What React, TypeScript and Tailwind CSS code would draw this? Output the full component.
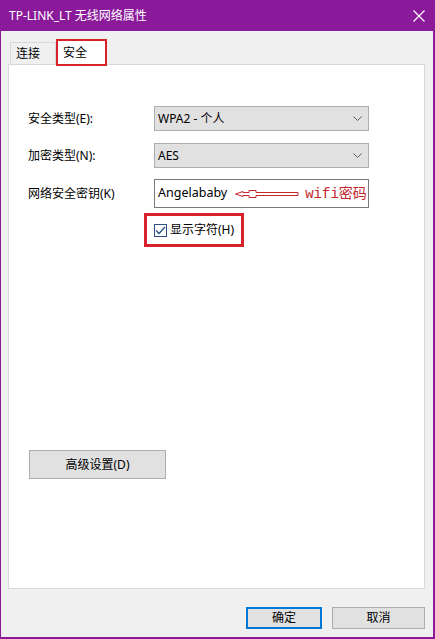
import { ReactNode } from 'react';

const font = "font-['Noto_Sans','Noto_Sans_CJK_SC',sans-serif]";

function Chevron() {
    return (
        <svg width="9" height="5" viewBox="0 0 9 5" className="mr-[6px]">
            <path d="M0.5 0.5 L4.5 4.5 L8.5 0.5" fill="none" stroke="#5a5a5a" strokeWidth="1" />
        </svg>
    );
}

function Select({ value }: { value: string }) {
    return (
        <div className="flex h-[25px] w-[215px] items-center justify-between border border-[#adadad] bg-[#e1e1e1] pl-[3px]">
            <span className="text-[12px] leading-none text-black">{value}</span>
            <Chevron />
        </div>
    );
}

function Row({ label, children, className = '' }: { label: string; children: ReactNode; className?: string }) {
    return (
        <div className={`flex items-center ${className}`}>
            <span className="w-[126px] text-[12px] leading-none text-black">{label}</span>
            {children}
        </div>
    );
}

export default function App() {
    return (
        <div className={`${font} flex h-[639px] w-[435px] flex-col border-b-2 border-l border-r-2 border-[#8a1a9a] bg-[#f0f0f0]`}>
            {/* title bar */}
            <div className="flex h-[31px] shrink-0 items-center justify-between bg-[#8a1a9a] pl-[8px] pr-[8px]">
                <span className="text-[12px] leading-none text-white">TP-LINK_LT 无线网络属性</span>
                <svg width="12" height="12" viewBox="0 0 12 12">
                    <path d="M0.5 0.5 L11.5 11.5 M11.5 0.5 L0.5 11.5" stroke="#ffffff" strokeWidth="1.2" />
                </svg>
            </div>

            <div className="ml-[7px] flex w-[417px] flex-1 flex-col">
                {/* tabs */}
                <div className="flex h-[33px] items-end pl-[2px]">
                    <div className="flex h-[22px] w-[46px] items-center border border-b-0 border-[#d9d9d9] pl-[5px] text-[12px] leading-none text-black">
                        连接
                    </div>
                    <div className="relative z-10 -mb-[2px] flex h-[27px] w-[51px] items-center border-2 border-[#d8232c] bg-white pl-[5px] text-[12px] leading-none text-black">
                        安全
                    </div>
                </div>

                {/* panel */}
                <div className="flex h-[525px] flex-col border border-[#d9d9d9] bg-white pl-[19px] pt-[41px]">
                    <Row label="安全类型(E):">
                        <Select value="WPA2 - 个人" />
                    </Row>
                    <Row label="加密类型(N):" className="mt-[12px]">
                        <Select value="AES" />
                    </Row>
                    <Row label="网络安全密钥(K)" className="mt-[11px]">
                        <div className="flex h-[29px] w-[215px] items-center border border-[#7a7a7a] bg-white pl-[3px]">
                            <span className="text-[12.5px] leading-none text-black">Angelababy</span>
                            <svg width="64" height="10" viewBox="0 0 64 10" className="ml-[8px]">
                                <path
                                    d="M0.5 5 L8 2.5 L8 3.5 L14 3.5 L14 1.5 L21 1.5 L21 3.5 L63 3.5 L63 6.5 L21 6.5 L21 8.5 L14 8.5 L14 6.5 L8 6.5 L8 7.5 Z"
                                    fill="none"
                                    stroke="#c3262e"
                                    strokeWidth="1"
                                />
                            </svg>
                            <span className="ml-[6px] text-[14px] leading-none text-[#c3262e]">
                                <span className="font-['Liberation_Mono',monospace]">wifi</span>密码
                            </span>
                        </div>
                    </Row>

                    <div className="ml-[116px] mt-[5px] flex h-[34px] w-[100px] items-center border-[3px] border-[#d8232c] pl-[7px]">
                        <div className="flex h-[13px] w-[13px] items-center justify-center border border-[#2b4f86] bg-white">
                            <svg width="11" height="9" viewBox="0 0 11 9">
                                <path d="M1 4.5 L4 7.5 L10 1" fill="none" stroke="#2b4f86" strokeWidth="1.3" />
                            </svg>
                        </div>
                        <span className="ml-[3px] text-[12px] leading-none text-black">显示字符(H)</span>
                    </div>

                    <button className="ml-[1px] mt-[203px] flex h-[29px] w-[137px] items-center justify-center border border-[#adadad] bg-[#e1e1e1] text-[12px] leading-none text-black">
                        高级设置(D)
                    </button>
                </div>

                {/* footer */}
                <div className="flex justify-end gap-[10px] pt-[18px]">
                    <button className="flex h-[22px] w-[76px] items-center justify-center border-2 border-[#0078d7] bg-[#e1e1e1] text-[12px] leading-none text-black">
                        确定
                    </button>
                    <button className="flex h-[22px] w-[93px] items-center justify-center border border-[#adadad] bg-[#e1e1e1] text-[12px] leading-none text-black">
                        取消
                    </button>
                </div>
            </div>
        </div>
    );
}
